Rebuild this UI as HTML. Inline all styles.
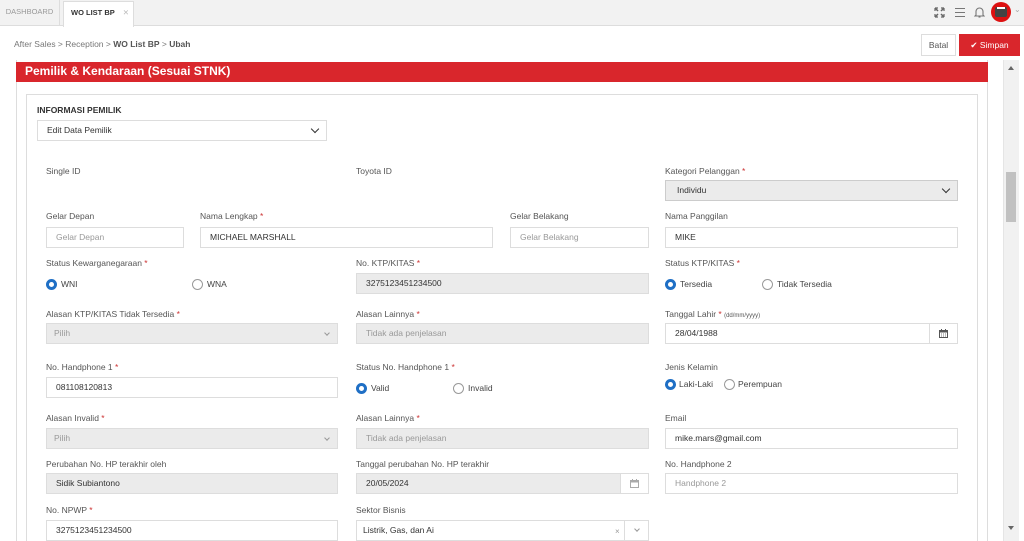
<!DOCTYPE html>
<html><head><meta charset="utf-8"><style>
*{box-sizing:border-box;margin:0;padding:0}
body{width:1024px;height:541px;overflow:hidden;background:#fff;font-family:"Liberation Sans",sans-serif;color:#444;position:relative;font-size:9px}
.a{position:absolute}
.lbl{position:absolute;font-size:8.5px;color:#555;white-space:nowrap}
.lbl i{color:#c33;font-style:normal}
.in{position:absolute;height:21px;border:1px solid #ddd;background:#fff;font-size:8.5px;color:#333;padding-left:9px;line-height:19px;white-space:nowrap}
.g{background:#ebebeb;border-color:#ddd}
.ph{color:#999}
.rad{position:absolute;font-size:8.5px;color:#444;line-height:11px;padding-left:15px;white-space:nowrap}
.rad:before{content:"";position:absolute;left:0;top:0;width:9px;height:9px;border:1px solid #999;border-radius:50%;background:#fff}
.rad.on:before{border:3px solid #1f6fc5;width:5px;height:5px}
.chev{position:absolute;right:8px;top:6px;width:6px;height:6px;border-right:1.5px solid #999;border-bottom:1.5px solid #999;transform:rotate(45deg)}
.cal{position:absolute;right:0;top:0;width:28px;height:19px;border-left:1px solid #ddd;background:#fff}
.cal svg{position:absolute;left:9px;top:5px}
</style></head><body>
<div class="a" style="left:0;top:0;width:1024px;height:26px;background:#f2f2f2;border-bottom:1px solid #ddd"></div>
<div class="a" style="left:0;top:0;width:60px;height:26px;border-right:1px solid #ddd;font-size:7.5px;color:#999;line-height:24px;text-align:center">DASHBOARD</div>
<div class="a" style="left:63px;top:1px;width:71px;height:26px;background:#fff;border:1px solid #ddd;border-bottom:none;font-size:7.5px;color:#333;line-height:22px;padding-left:7px;font-weight:bold">WO LIST BP <span style="color:#bbb;margin-left:6px;font-weight:normal">✕</span></div>
<svg class="a" style="left:934px;top:7px" width="11" height="11" viewBox="0 0 11 11" fill="none" stroke="#666" stroke-width="1.5"><path d="M1 1l3 3M10 1L7 4M1 10l3-3M10 10L7 7"/><path d="M1 1h3M1 1v3M10 1H7M10 1v3M1 10h3M1 10V7M10 10H7M10 10V7" stroke-width="1.2"/></svg>
<div class="a" style="left:955px;top:8px;width:10px;height:9px;border-top:1.5px solid #777;border-bottom:1.5px solid #777"><div style="margin-top:2.5px;border-top:1.5px solid #777"></div></div>
<svg class="a" style="left:974px;top:6px" width="11" height="12" viewBox="0 0 11 12" fill="none" stroke="#777" stroke-width="1.1"><path d="M2 9V5.5a3.5 3.5 0 0 1 7 0V9l1 1H1z"/><path d="M4.5 11h2"/></svg>
<div class="a" style="left:991px;top:2px;width:20px;height:20px;border-radius:50%;background:#d11"><div style="margin:5px 4px;width:12px;height:10px;background:#444;border-radius:2px"><div style="margin:3px 2px 0;height:2px;background:#fff"></div></div></div>
<div class="a" style="left:1014px;top:5px;font-size:8px;color:#aaa">⌄</div>
<div class="a" style="left:14px;top:39px;font-size:8.5px;color:#777">After Sales &gt; Reception &gt; <b style="color:#555">WO List BP</b> &gt; <b style="color:#555">Ubah</b></div>
<div class="a" style="left:921px;top:34px;width:35px;height:22px;border:1px solid #ddd;font-size:8.5px;color:#555;line-height:20px;text-align:center">Batal</div>
<div class="a" style="left:959px;top:34px;width:61px;height:22px;background:#d9262c;color:#fff;font-size:8.5px;line-height:22px;text-align:center">✔ Simpan</div>
<div class="a" style="left:16px;top:60px;width:972px;height:481px;border-left:1px solid #ddd;border-right:1px solid #ddd"></div>
<div class="a" style="left:16px;top:62px;width:972px;height:20px;background:#d9262c;color:#fff;font-size:12px;font-weight:bold;line-height:18px;padding-left:9px">Pemilik &amp; Kendaraan (Sesuai STNK)</div>
<div class="a" style="left:26px;top:94px;width:952px;height:447px;border:1px solid #ddd;border-bottom:none"></div>
<div class="a" style="left:1003px;top:60px;width:16px;height:481px;background:#f1f1f1;border-left:1px solid #e5e5e5"></div>
<div class="a" style="left:1006px;top:172px;width:10px;height:50px;background:#c1c1c1"></div>
<div class="a" style="left:1008px;top:66px;border:3px solid transparent;border-bottom:4px solid #666;border-top:none"></div>
<div class="a" style="left:1008px;top:526px;border:3px solid transparent;border-top:4px solid #666;border-bottom:none"></div>

<div class="lbl" style="left:37px;top:105px;font-weight:bold;color:#333">INFORMASI PEMILIK</div>
<div class="in" style="left:37px;top:120px;width:290px">Edit Data Pemilik<div class="chev" style="border-color:#333;top:5px"></div></div>

<div class="lbl" style="left:46px;top:166px">Single ID</div>
<div class="lbl" style="left:356px;top:166px">Toyota ID</div>
<div class="lbl" style="left:665px;top:166px">Kategori Pelanggan <i>*</i></div>
<div class="in g" style="left:665px;top:180px;width:293px;border-color:#ccc;padding-left:11px">Individu<div class="chev" style="border-color:#333;top:5px"></div></div>

<div class="lbl" style="left:46px;top:211px">Gelar Depan</div>
<div class="lbl" style="left:200px;top:211px">Nama Lengkap <i>*</i></div>
<div class="lbl" style="left:510px;top:211px">Gelar Belakang</div>
<div class="lbl" style="left:665px;top:211px">Nama Panggilan</div>
<div class="in ph" style="left:46px;top:227px;width:138px">Gelar Depan</div>
<div class="in" style="left:200px;top:227px;width:293px">MICHAEL MARSHALL</div>
<div class="in ph" style="left:510px;top:227px;width:139px">Gelar Belakang</div>
<div class="in" style="left:665px;top:227px;width:293px">MIKE</div>

<div class="lbl" style="left:46px;top:258px">Status Kewarganegaraan <i>*</i></div>
<div class="lbl" style="left:356px;top:258px">No. KTP/KITAS <i>*</i></div>
<div class="lbl" style="left:665px;top:258px">Status KTP/KITAS <i>*</i></div>
<div class="rad on" style="left:46px;top:279px">WNI</div>
<div class="rad" style="left:192px;top:279px">WNA</div>
<div class="in g" style="left:356px;top:273px;width:293px">3275123451234500</div>
<div class="rad on" style="left:665px;top:279px">Tersedia</div>
<div class="rad" style="left:762px;top:279px">Tidak Tersedia</div>

<div class="lbl" style="left:46px;top:309px">Alasan KTP/KITAS Tidak Tersedia <i>*</i></div>
<div class="lbl" style="left:356px;top:309px">Alasan Lainnya <i>*</i></div>
<div class="lbl" style="left:665px;top:309px">Tanggal Lahir <i>*</i> <span style="font-size:6px">(dd/mm/yyyy)</span></div>
<div class="in g ph" style="left:46px;top:323px;width:292px;padding-left:7px">Pilih<div class="chev" style="width:4px;height:4px;border-width:1px;top:7px"></div></div>
<div class="in g ph" style="left:356px;top:323px;width:293px">Tidak ada penjelasan</div>
<div class="in" style="left:665px;top:323px;width:293px">28/04/1988<div class="cal"><svg width="9" height="9" viewBox="0 0 9 9"><rect x="0.5" y="1.5" width="8" height="7" fill="none" stroke="#555"/><rect x="0.5" y="1.5" width="8" height="2" fill="#555"/><path d="M2.5 0v2M6.5 0v2" stroke="#555"/><path d="M2 5h1M4 5h1M6 5h1M2 7h1M4 7h1M6 7h1" stroke="#777"/></svg></div></div>

<div class="lbl" style="left:46px;top:362px">No. Handphone 1 <i>*</i></div>
<div class="lbl" style="left:356px;top:362px">Status No. Handphone 1 <i>*</i></div>
<div class="lbl" style="left:665px;top:362px">Jenis Kelamin</div>
<div class="in" style="left:46px;top:377px;width:292px">081108120813</div>
<div class="rad on" style="left:356px;top:383px">Valid</div>
<div class="rad" style="left:453px;top:383px">Invalid</div>
<div class="rad on" style="left:665px;top:379px;padding-left:14px">Laki-Laki</div>
<div class="rad" style="left:724px;top:379px;padding-left:14px">Perempuan</div>

<div class="lbl" style="left:46px;top:413px">Alasan Invalid <i>*</i></div>
<div class="lbl" style="left:356px;top:413px">Alasan Lainnya <i>*</i></div>
<div class="lbl" style="left:665px;top:413px">Email</div>
<div class="in g ph" style="left:46px;top:428px;width:292px;padding-left:7px">Pilih<div class="chev" style="width:4px;height:4px;border-width:1px;top:7px"></div></div>
<div class="in g ph" style="left:356px;top:428px;width:293px">Tidak ada penjelasan</div>
<div class="in" style="left:665px;top:428px;width:293px">mike.mars@gmail.com</div>

<div class="lbl" style="left:46px;top:459px">Perubahan No. HP terakhir oleh</div>
<div class="lbl" style="left:356px;top:459px">Tanggal perubahan No. HP terakhir</div>
<div class="lbl" style="left:665px;top:459px">No. Handphone 2</div>
<div class="in g" style="left:46px;top:473px;width:292px">Sidik Subiantono</div>
<div class="in g" style="left:356px;top:473px;width:293px">20/05/2024<div class="cal"><svg width="9" height="9" viewBox="0 0 9 9"><rect x="0.5" y="1.5" width="8" height="7" fill="none" stroke="#aaa"/><rect x="0.5" y="1.5" width="8" height="2" fill="#aaa"/><path d="M2.5 0v2M6.5 0v2" stroke="#aaa"/></svg></div></div>
<div class="in ph" style="left:665px;top:473px;width:293px">Handphone 2</div>

<div class="lbl" style="left:46px;top:505px">No. NPWP <i>*</i></div>
<div class="lbl" style="left:356px;top:505px">Sektor Bisnis</div>
<div class="in" style="left:46px;top:520px;width:292px">3275123451234500</div>
<div class="in" style="left:356px;top:520px;width:293px;padding-left:6px">Listrik, Gas, dan Ai<span style="position:absolute;left:258px;top:1px;color:#999;font-size:8px">×</span><div class="cal" style="width:24px;background:#fff"><div class="chev" style="width:4px;height:4px;border-width:1px;top:6px;right:9px"></div></div></div>
</body></html>
